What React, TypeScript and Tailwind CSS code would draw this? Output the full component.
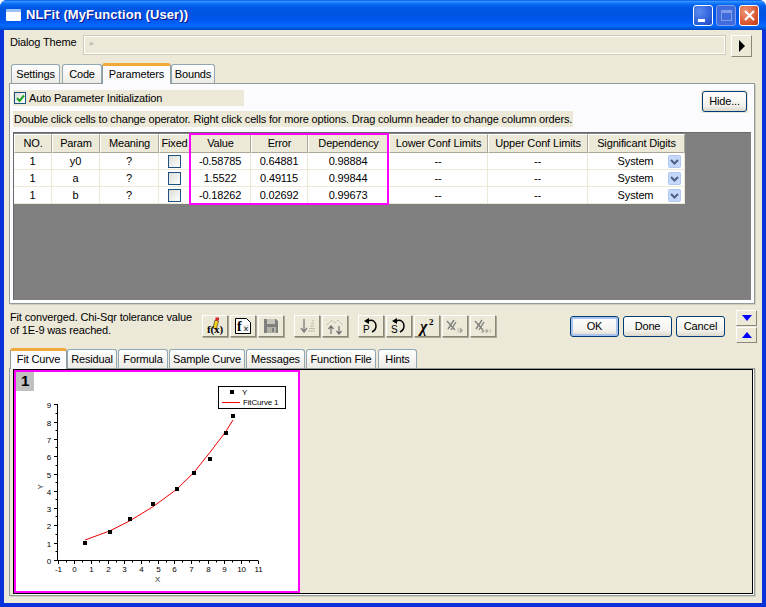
import React from 'react';

const colWidths = [38, 48, 59, 31, 61, 57, 81, 99, 100, 97];
const headers = ['NO.', 'Param', 'Meaning', 'Fixed', 'Value', 'Error', 'Dependency', 'Lower Conf Limits', 'Upper Conf Limits', 'Significant Digits'];
const rows = [
  ['1', 'y0', '?', '', '-0.58785', '0.64881', '0.98884', '--', '--', 'System'],
  ['1', 'a', '?', '', '1.5522', '0.49115', '0.99844', '--', '--', 'System'],
  ['1', 'b', '?', '', '-0.18262', '0.02692', '0.99673', '--', '--', 'System'],
];

const Tab: React.FC<{ label: string; width: number; active?: boolean; ml?: number }> = ({ label, width, active, ml = 0 }) => (
  <div
    style={{ width, marginLeft: ml }}
    className={
      active
        ? 'relative z-10 -mb-px h-[21px] shrink-0 rounded-t-[3px] border-x border-[#919B9C] border-t-[3px] border-t-[#F2A93B] bg-[#FCFCFE] text-center leading-[16px]'
        : 'h-[19px] shrink-0 rounded-t-[3px] border-x border-t border-[#91A7B4] bg-[linear-gradient(#ffffff,#ECEBE6)] text-center leading-[19px]'
    }
  >
    {label}
  </div>
);

const XpButton: React.FC<{ label: string; focused?: boolean; className?: string }> = ({ label, focused, className }) => (
  <div
    className={`flex h-[21px] items-center justify-center rounded-[3px] border border-[#003C74] bg-[linear-gradient(#ffffff,#F3F2EC_70%,#DCD8CC)] ${focused ? 'shadow-[inset_0_0_0_2px_#A9C4EE]' : ''} ${className ?? ''}`}
  >
    {label}
  </div>
);

const ToolButton: React.FC<{ children?: React.ReactNode; ml?: number }> = ({ children, ml = 2 }) => (
  <div
    style={{ marginLeft: ml }}
    className="flex h-[22px] w-[26px] shrink-0 items-center justify-center border border-r-[#8A8775] border-b-[#8A8775] border-l-white border-t-white bg-[#ECE9D8] shadow-[1px_1px_0_#ACA899]"
  >
    <svg width="24" height="20" viewBox="0 0 24 20">{children}</svg>
  </div>
);

const DropArrow = () => (
  <svg width="13" height="13" viewBox="0 0 13 13" className="shrink-0">
    <rect x="0.5" y="0.5" width="12" height="12" rx="1" fill="#C6D8FA" stroke="#B0C8F0" />
    <path d="M3 5l3.5 3.5L10 5" fill="none" stroke="#4D6185" strokeWidth="2" />
  </svg>
);

const yTicks = [0, 1, 2, 3, 4, 5, 6, 7, 8, 9];
const xTicks = [-1, 0, 1, 2, 3, 4, 5, 6, 7, 8, 9, 10, 11];
const pts = [[69, 170.7], [94.3, 159.7], [114, 147], [137, 132], [160.7, 116.7], [177.7, 100.7], [194, 87], [209.7, 60.7], [217, 44]];
const curve = '69,168 94.3,158.7 114,148.7 137,134.7 160.7,117.3 177.7,100.7 194,80.3 209.7,59.7 217,48';

const Chart = () => (
  <svg width="282" height="220" viewBox="0 0 282 220" className="block">
    <path d="M41.5 32V188.5H242" fill="none" stroke="#000" />
    {yTicks.map((v) => {
      const y = Math.round(188 - v * 17.3) + 0.5;
      return (
        <g key={v}>
          <line x1="38" x2="41.5" y1={y} y2={y} stroke="#000" />
          {v < 9 && <line x1="39.5" x2="41.5" y1={y - 9} y2={y - 9} stroke="#000" />}
          <text x="35" y={y + 3} textAnchor="end" fontSize="8" fill="#000">{v}</text>
        </g>
      );
    })}
    {xTicks.map((v, i) => {
      const x = Math.round(41.7 + i * 16.67) + 0.5;
      return (
        <g key={v}>
          <line x1={x} x2={x} y1="188.5" y2="192" stroke="#000" />
          {i < 12 && <line x1={x + 8} x2={x + 8} y1="188.5" y2="190.5" stroke="#000" />}
          <text x={x} y="200" textAnchor="middle" fontSize="8" fill="#000">{v}</text>
        </g>
      );
    })}
    <text x="141.5" y="210" textAnchor="middle" fontSize="8" fill="#333">X</text>
    <text x="27" y="115" textAnchor="middle" fontSize="8" fill="#333" transform="rotate(-90 27 115)">Y</text>
    <polyline points={curve} fill="none" stroke="#F00000" />
    {pts.map(([x, y]) => (
      <rect key={x} x={Math.round(x) - 2} y={Math.round(y) - 2} width="4" height="4" fill="#000" />
    ))}
    <rect x="202.5" y="14.5" width="67" height="22" fill="#fff" stroke="#000" />
    <rect x="214" y="18" width="4" height="4" fill="#000" />
    <text x="226" y="23" fontSize="8" fill="#000">Y</text>
    <line x1="206" x2="224" y1="30.5" y2="30.5" stroke="#F00000" />
    <text x="227" y="33" fontSize="8" fill="#000">FitCurve 1</text>
  </svg>
);

export default function App() {
  return (
    <div className="flex h-[607px] w-[766px] flex-col overflow-hidden rounded-t-[7px] bg-[#0831D9] font-['Liberation_Sans',sans-serif] text-[11px] tracking-[-0.15px] text-black">
      {/* title bar */}
      <div className="flex h-[30px] shrink-0 items-center bg-[linear-gradient(#0058EE_0%,#3593FF_5%,#1A7FFF_9%,#0466F2_16%,#0057E5_26%,#0054E3_50%,#0055EB_62%,#005BF5_74%,#026AFE_84%,#0062EF_90%,#0052D6_96%,#0045BA_100%)] pl-[6px] pr-[7px]">
        <div className="h-[12px] w-[15px] rounded-[1px] border-t-[3px] border-[#9CC2F5] bg-white" />
        <span className="ml-[5px] text-[13px] font-bold tracking-[0.1px] text-white [text-shadow:1px_1px_0_#0F1089]">NLFit (MyFunction (User))</span>
        <div className="ml-auto flex gap-[3px]">
          <div className="flex h-[21px] w-[20px] items-end rounded-[3px] border border-white bg-[radial-gradient(circle_at_30%_30%,#5C8CEF,#2A5BD8_70%,#1E45B8)] pb-[3px] pl-[4px]">
            <div className="h-[3px] w-[7px] bg-white" />
          </div>
          <div className="flex h-[21px] w-[20px] items-center justify-center rounded-[3px] border border-[#7F9DE8] bg-[#3F6BDC]">
            <div className="h-[11px] w-[11px] border border-t-[3px] border-[#7F9DE8]" />
          </div>
          <div className="flex h-[21px] w-[20px] items-center justify-center rounded-[3px] border border-white bg-[radial-gradient(circle_at_30%_30%,#EE9478,#D9552F_65%,#B8371A)]">
            <svg width="13" height="13" viewBox="0 0 13 13">
              <path d="M2 2l9 9M11 2l-9 9" stroke="#fff" strokeWidth="2.2" />
            </svg>
          </div>
        </div>
      </div>

      {/* dialog body */}
      <div className="mx-[4px] mb-[4px] flex-1 bg-[#ECE9D8] pl-[5px] pr-[7px] pt-[5px]">
        <div className="flex h-[22px] items-start pl-[1px]">
          <span className="w-[73px] leading-[15px]">Dialog Theme</span>
          <div className="h-[20px] w-[643px] border border-[#CFCBB8] bg-[#ECE9D8] pl-[5px] text-[8px] leading-[16px] text-[#999] shadow-[inset_1px_1px_0_#fff,inset_-1px_-1px_0_#fff]">×</div>
          <div className="ml-[5px] flex h-[22px] w-[21px] items-center justify-center border border-b-[#8A8775] border-l-white border-r-[#8A8775] border-t-white">
            <svg width="8" height="12" viewBox="0 0 8 12"><path d="M1 0l6 6-6 6z" fill="#000" /></svg>
          </div>
        </div>

        {/* top tabs */}
        <div className="mt-[6px] flex h-[20px] items-end pl-[2px]">
          <Tab label="Settings" width={49} />
          <Tab label="Code" width={40} ml={2} />
          <Tab label="Parameters" width={69} active />
          <Tab label="Bounds" width={44} />
        </div>

        <div className="h-[221px] border border-[#919B9C] bg-[#FCFCFE] pl-[3px] pt-[6px] shadow-[1px_1px_0_#D0CEBF]">
          <div className="flex h-[21px] items-start justify-between pr-[6px]">
            <div className="flex h-[16px] w-[231px] items-center bg-[#ECE9D8] pl-[1px]">
              <div className="flex h-[12px] w-[12px] items-center justify-center border border-[#1C5180] bg-[linear-gradient(135deg,#DCDCD7,#ffffff)]">
                <svg width="9" height="9" viewBox="0 0 9 9"><path d="M1 4l2.5 3L8 1.5" fill="none" stroke="#21A121" strokeWidth="2" /></svg>
              </div>
              <span className="ml-[3px]">Auto Parameter Initialization</span>
            </div>
            <div className="h-[23px] w-[47px] bg-[#ECE9D8] p-[1px]">
              <XpButton label="Hide..." className="bg-white" />
            </div>
          </div>
          <div className="h-[16px] w-[560px] whitespace-nowrap bg-[#ECE9D8] pl-px leading-[16px]">
            Double click cells to change operator. Right click cells for more options. Drag column header to change column orders.
          </div>

          {/* parameters grid */}
          <div className="mt-[5px] h-[168px] w-[738px] border-l border-t border-[#6A6A6A] bg-[#808080] pt-px">
            <div className="relative w-[671px] bg-white">
              <div className="flex h-[19px]">
                {headers.map((h, i) => (
                  <div
                    key={h}
                    style={{ width: colWidths[i] }}
                    className="flex items-center justify-center whitespace-nowrap border border-b-[#ACA899] border-l-white border-r-[#ACA899] border-t-white bg-[#ECE9D8]"
                  >
                    {h}
                  </div>
                ))}
              </div>
              {rows.map((row, r) => (
                <div key={r} className="flex h-[17px]">
                  {row.map((cell, i) => (
                    <div
                      key={i}
                      style={{ width: colWidths[i] }}
                      className="flex items-center justify-center border-b border-r border-[#ECE9D8]"
                    >
                      {i === 3 && <div className="h-[13px] w-[13px] border border-[#1C5180] bg-[linear-gradient(135deg,#DCDCD7,#ffffff)]" />}
                      {i === 9 ? (
                        <>
                          <span className="ml-[15px] flex-1 text-center">{cell}</span>
                          <span className="mr-[3px]"><DropArrow /></span>
                        </>
                      ) : (
                        i !== 3 && cell
                      )}
                    </div>
                  ))}
                </div>
              ))}
              <div className="absolute left-[175px] top-[-1px] h-[72px] w-[200px] border-2 border-[#FF00FF]" />
            </div>
          </div>
        </div>

        {/* status and toolbar */}
        <div className="flex h-[44px] items-start">
          <div className="ml-px mt-[7px] w-[192px] shrink-0 leading-[13px]">
            Fit converged. Chi-Sqr tolerance value<br />of 1E-9 was reached.
          </div>
          <div className="mt-[11px] flex shrink-0">
            <ToolButton ml={0}>
              <path d="M10 12l2-8 3.5 1-2 8z" fill="#F5D21E" stroke="#222" strokeWidth="0.6" />
              <rect x="12.5" y="1.5" width="3.5" height="3" fill="#D8222A" />
              <text x="4" y="17" fontSize="11" fontFamily="Liberation Serif" fontWeight="700">f(x)</text>
            </ToolButton>
            <ToolButton>
              <path d="M4.5 2.5h11l4 4v11h-15z" fill="#fff" stroke="#000" />
              <text x="6" y="15" fontSize="14" fontFamily="Liberation Serif" fontWeight="700">f</text>
              <rect x="12" y="9" width="6" height="6" fill="#E8E8E8" />
              <text x="13" y="14.5" fontSize="8" fontFamily="Liberation Sans">x</text>
            </ToolButton>
            <ToolButton>
              <path d="M5 3h12l2 2v12H5z" fill="#808080" />
              <rect x="8" y="3" width="8" height="5" fill="#C8C6B8" />
              <rect x="8" y="11" width="9" height="6" fill="#B4B2A4" />
              <rect x="13" y="12" width="2" height="4" fill="#808080" />
            </ToolButton>
            <ToolButton ml={10}>
              <path d="M9 3v12M6 12l3 4 3-4" fill="none" stroke="#808080" strokeWidth="1.4" />
              <path d="M13 15h7M14 12.5h6M15 10h4M16 7.5h3M17 5h2" stroke="#BDBBAB" />
            </ToolButton>
            <ToolButton>
              <path d="M4 9l5-5 3 3 3-3 5 5" fill="none" stroke="#A8A698" strokeDasharray="1 1" />
              <path d="M8 18v-7M5.5 13L8 10l2.5 3M16 10v7M13.5 15l2.5 3 2.5-3" fill="none" stroke="#707070" strokeWidth="1.2" />
            </ToolButton>
            <ToolButton ml={10}>
              <path d="M9 5c5-2 8 1 8 5s-2 5-4 6" fill="none" stroke="#000" strokeWidth="1.5" />
              <path d="M5 5l5-3v6z" fill="#000" />
              <text x="4" y="17" fontSize="10">P</text>
            </ToolButton>
            <ToolButton>
              <path d="M9 5c5-2 8 1 8 5s-2 5-4 6" fill="none" stroke="#000" strokeWidth="1.5" />
              <path d="M5 5l5-3v6z" fill="#000" />
              <text x="4" y="17" fontSize="10">S</text>
            </ToolButton>
            <ToolButton>
              <text x="5" y="16" fontSize="16" fontFamily="Liberation Serif" fontWeight="700" fontStyle="italic">χ</text>
              <text x="14" y="9" fontSize="9" fontFamily="Liberation Serif" fontWeight="700">2</text>
            </ToolButton>
            <ToolButton>
              <path d="M5 13l6-9M8 14l5-8M4 5l8 9" fill="none" stroke="#808080" strokeWidth="1.4" />
              <path d="M15 12v5M17 12l3 2.5-3 2.5z" fill="#A8A698" stroke="#A8A698" strokeWidth="0.6" />
            </ToolButton>
            <ToolButton>
              <path d="M5 13l6-9M8 14l5-8M4 5l8 9" fill="none" stroke="#808080" strokeWidth="1.4" />
              <path d="M11 13l2.5 2-2.5 2zM15 13l2.5 2-2.5 2zM19.5 13v4" fill="#A8A698" stroke="#A8A698" strokeWidth="0.6" />
            </ToolButton>
          </div>
          <div className="ml-[74px] mt-[12px] flex shrink-0 gap-[4px]">
            <XpButton label="OK" focused className="w-[49px]" />
            <XpButton label="Done" className="w-[49px]" />
            <XpButton label="Cancel" className="w-[49px]" />
          </div>
          <div className="ml-[11px] mt-[6px] flex shrink-0 flex-col gap-px">
            <div className="flex h-[16px] w-[21px] items-center justify-center border border-b-[#8A8775] border-l-white border-r-[#8A8775] border-t-white">
              <svg width="10" height="6" viewBox="0 0 10 6"><path d="M0 0h10L5 6z" fill="#0000FF" /></svg>
            </div>
            <div className="flex h-[16px] w-[21px] items-center justify-center border border-b-[#8A8775] border-l-white border-r-[#8A8775] border-t-white">
              <svg width="10" height="6" viewBox="0 0 10 6"><path d="M0 6h10L5 0z" fill="#0000FF" /></svg>
            </div>
          </div>
        </div>

        {/* bottom tabs */}
        <div className="flex h-[20px] items-end pl-[1px]">
          <Tab label="Fit Curve" width={57} active />
          <Tab label="Residual" width={50} />
          <Tab label="Formula" width={50} ml={1} />
          <Tab label="Sample Curve" width={76} ml={1} />
          <Tab label="Messages" width={59} ml={1} />
          <Tab label="Function File" width={70} ml={1} />
          <Tab label="Hints" width={39} ml={2} />
        </div>
        <div className="h-[228px] border border-[#919B9C] bg-[#ECE9D8] pb-[2px] pl-[3px] pr-px shadow-[1px_1px_0_#D0CEBF]">
          <div className="h-[225px] border border-black bg-[#ECE9D8] shadow-[1px_1px_0_#fff]">
            <div className="h-[223px] w-[286px] border-2 border-[#FF00FF] bg-white">
              <div className="relative">
                <div className="absolute left-0 top-0 flex h-[19px] w-[18px] items-center justify-center bg-[#C0C0C0] text-[15px] font-bold">1</div>
                <Chart />
              </div>
            </div>
          </div>
        </div>
      </div>
    </div>
  );
}
